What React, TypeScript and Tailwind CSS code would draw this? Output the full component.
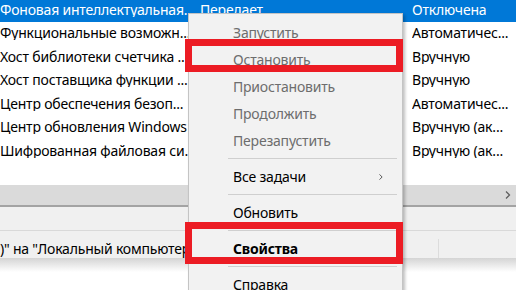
const rows = [
  { name: 'Фоновая интеллектуальная...', state: 'Передает', start: 'Отключена' },
  { name: 'Функциональные возможн...', state: '', start: 'Автоматичес...' },
  { name: 'Хост библиотеки счетчика ...', state: '', start: 'Вручную' },
  { name: 'Хост поставщика функции ...', state: '', start: 'Вручную' },
  { name: 'Центр обеспечения безоп...', state: '', start: 'Автоматичес...' },
  { name: 'Центр обновления Windows', state: '', start: 'Вручную (ак...' },
  { name: 'Шифрованная файловая си...', state: '', start: 'Вручную (ак...' },
];

function Chevron({ className }: { className?: string }) {
  return (
    <svg viewBox="0 0 8 10" className={className} fill="none" stroke="currentColor" strokeWidth="1.3">
      <path d="M2 1.5 L5.5 5 L2 8.5" />
    </svg>
  );
}

function MenuItem({ label, disabled, bold, sub }: { label: string; disabled?: boolean; bold?: boolean; sub?: boolean }) {
  return (
    <div className={`flex h-[27px] items-center pl-[44px] pr-[18px] ${disabled ? 'text-[#6d6d6d]' : 'text-black'} ${bold ? 'font-bold' : ''}`}>
      <span className="flex-1">{label}</span>
      {sub && <Chevron className="h-[8px] w-[6px] text-[#555]" />}
    </div>
  );
}

function Separator() {
  return <div className="my-[4px] ml-[39px] mr-[5px] h-px bg-[#cfcfcf]" />;
}

export default function App() {
  return (
    <div className="relative h-[290px] w-[516px] overflow-hidden bg-white font-['Noto_Sans',sans-serif] text-[14px] leading-none tracking-[-0.2px]">
      <div className="flex h-full flex-col">
        <div className="h-[185px] overflow-hidden">
          <div className="-mt-[2px]">
            {rows.map((r, i) => (
              <div
                key={r.name}
                className={`flex h-[23.5px] items-center whitespace-nowrap ${i === 0 ? 'bg-[#0078d7] text-white' : 'text-black'}`}
              >
                <div className="w-[200px] overflow-hidden pr-[10px]">{r.name}</div>
                <div className="w-[212px] overflow-hidden">{r.state}</div>
                <div className="flex-1 overflow-hidden">{r.start}</div>
              </div>
            ))}
          </div>
        </div>

        <div className="flex h-[20px] items-center justify-end bg-[#dadada] pr-[4px]">
          <Chevron className="h-[10px] w-[8px] text-[#606060]" />
        </div>
        <div className="h-[2px] bg-[#a3a3a3]" />
        <div className="h-[23px] bg-[#f0f0f0]" />
        <div className="flex h-[28px] items-center border-t border-[#d9d9d9] bg-[#f0f0f0] pt-[8px]">
          <div className="w-[438px] whitespace-nowrap text-black">)" на "Локальный компьютер"</div>
          <div className="h-full w-px bg-[#dcdcdc]" />
        </div>
        <div className="h-[14px] bg-gradient-to-b from-[#d4d4d4] to-white" />
        <div className="flex-1 bg-white" />
      </div>

      <div className="absolute left-[188px] top-[13px] w-[215px] border border-[#c4c4c4] bg-[#f2f2f2] pt-[5px] pb-[10px] shadow-[2px_2px_3px_rgba(0,0,0,0.25)]">
        <MenuItem label="Запустить" disabled />
        <MenuItem label="Остановить" disabled />
        <MenuItem label="Приостановить" disabled />
        <MenuItem label="Продолжить" disabled />
        <MenuItem label="Перезапустить" disabled />
        <Separator />
        <MenuItem label="Все задачи" sub />
        <Separator />
        <MenuItem label="Обновить" />
        <Separator />
        <MenuItem label="Свойства" bold />
        <Separator />
        <MenuItem label="Справка" />
      </div>

      <div className="absolute left-[185px] top-[39px] h-[33px] w-[218px] border-[7px] border-[#ec1c24]" />
      <div className="absolute left-[185px] top-[222px] h-[42px] w-[218px] border-[7px] border-[#ec1c24]" />
    </div>
  );
}
